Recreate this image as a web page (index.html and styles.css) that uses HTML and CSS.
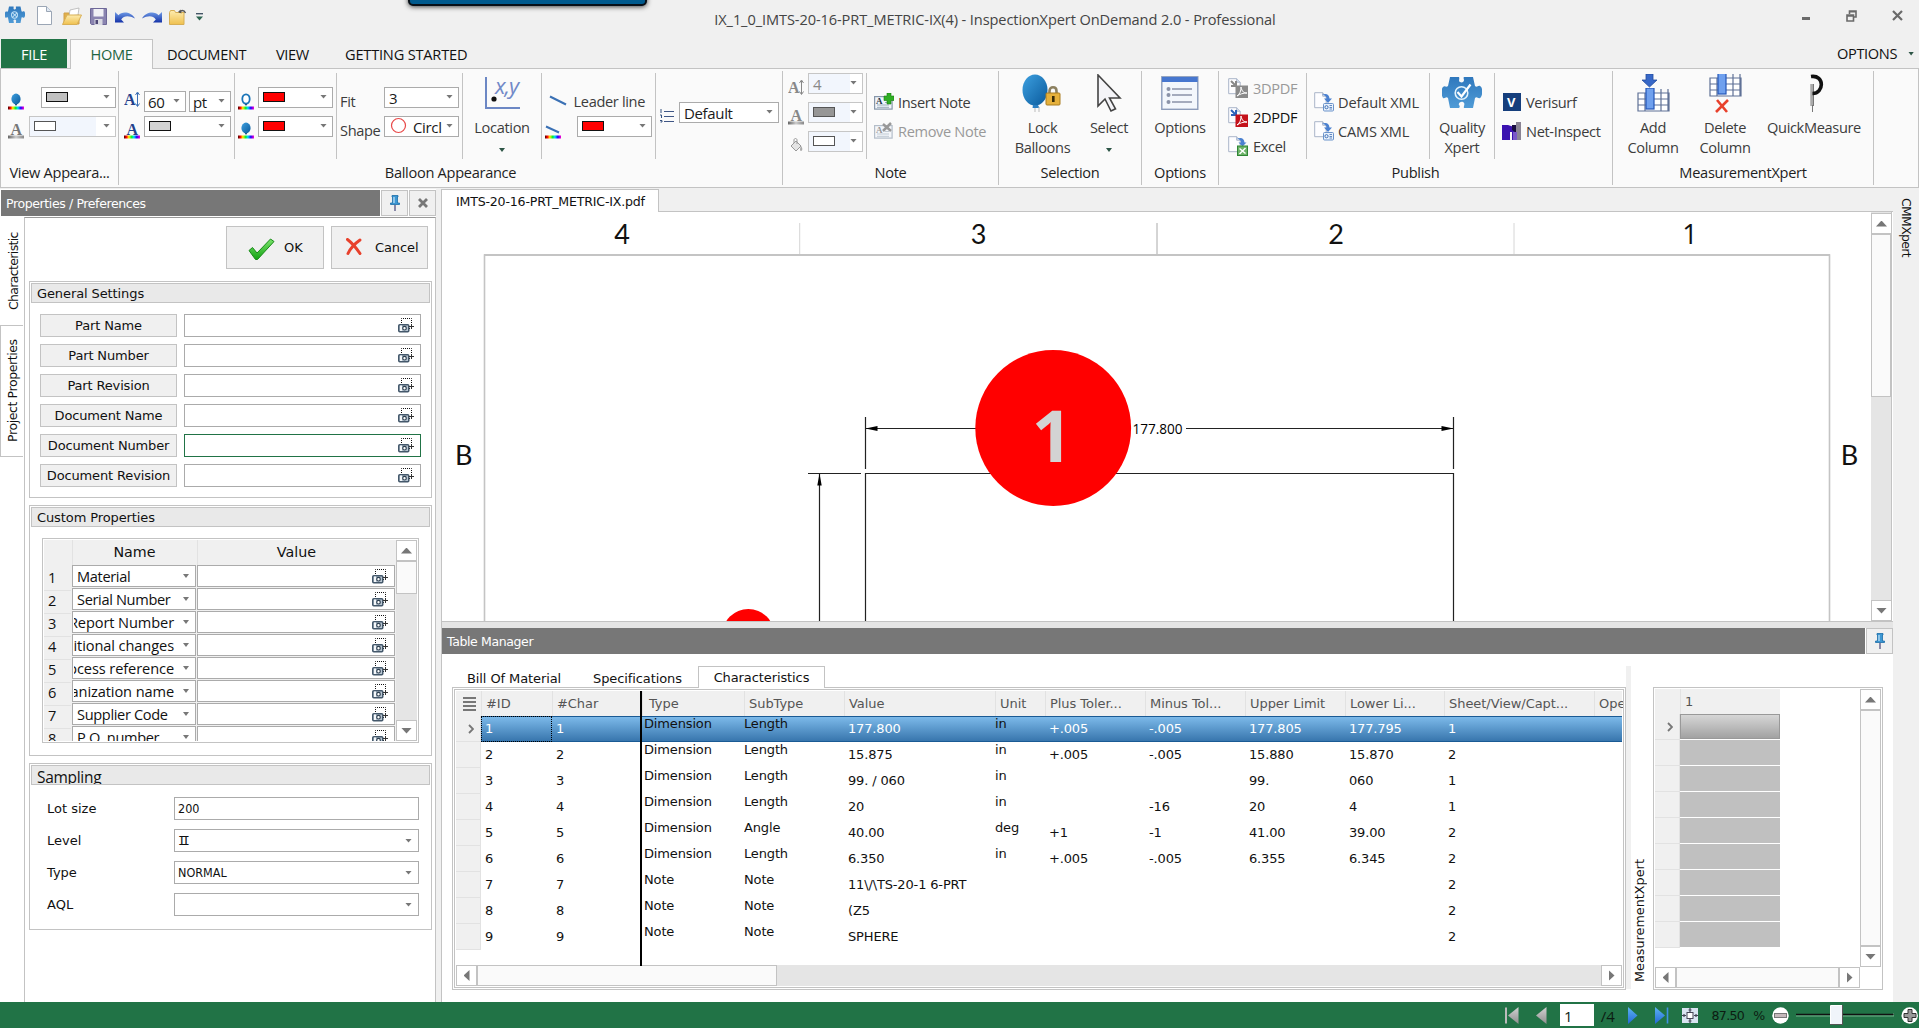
FILE: index.html
```html
<!DOCTYPE html>
<html lang="en">
<head>
<meta charset="utf-8">
<title>InspectionXpert OnDemand 2.0</title>
<link rel="stylesheet" href="styles.css">
</head>
<body>
<svg class="defs" width="0" height="0">
  <defs>
    <linearGradient id="gBlue" x1="0" y1="0" x2="1" y2="1"><stop offset="0" stop-color="#3da0e0"/><stop offset="1" stop-color="#0a5a9c"/></linearGradient>
    <linearGradient id="gPuz" x1="0" y1="0" x2="0" y2="1"><stop offset="0" stop-color="#2f78bd"/><stop offset="1" stop-color="#4f9bd6"/></linearGradient>
    <linearGradient id="gUndo" x1="0" y1="0" x2="0" y2="1"><stop offset="0" stop-color="#6f9be6"/><stop offset="1" stop-color="#1432a8"/></linearGradient>
    <linearGradient id="gFold" x1="0" y1="0" x2="0" y2="1"><stop offset="0" stop-color="#fdecb0"/><stop offset="1" stop-color="#efc04e"/></linearGradient>
    <linearGradient id="gGreen" x1="0" y1="0" x2="0" y2="1"><stop offset="0" stop-color="#7be36c"/><stop offset="1" stop-color="#14a314"/></linearGradient>
    <linearGradient id="gRain"><stop offset="0" stop-color="#400"/><stop offset=".15" stop-color="#f00"/><stop offset=".3" stop-color="#fe0"/><stop offset=".48" stop-color="#0e3"/><stop offset=".62" stop-color="#0df"/><stop offset=".8" stop-color="#20f"/><stop offset="1" stop-color="#f0c"/></linearGradient>
    <linearGradient id="gGray"><stop offset="0" stop-color="#666"/><stop offset=".5" stop-color="#ccc"/><stop offset="1" stop-color="#888"/></linearGradient>
    <linearGradient id="gNavG" x1="0" y1="0" x2="0" y2="1"><stop offset="0" stop-color="#d2d2d2"/><stop offset="1" stop-color="#8e8e8e"/></linearGradient>
    <linearGradient id="gNavB" x1="0" y1="0" x2="0" y2="1"><stop offset="0" stop-color="#5cb4f0"/><stop offset="1" stop-color="#2468d8"/></linearGradient>
  </defs>
  <symbol id="puzzle" viewBox="0 0 40 34"><path fill="url(#gPuz)" d="M8 1l9 0c1 2-1 4 1 5 2 1 4 0 4-2 0-1-1-2 0-3l9 0 2 9c2 2 3-1 5 0 3 1 3 10 0 12-2 1-3-2-5 0l-2 10-9 0c-1-2 2-4-1-6-2-1-5 1-4 3 1 1 1 2 0 3L8 32 6 22c-2-2-3 1-5 0-2-3-2-9 0-11 2-2 3 1 5-1z"/></symbol>
  <symbol id="balloon" viewBox="0 0 16 17"><ellipse cx="8" cy="6" rx="4.600" ry="5.400" fill="url(#gBlue)"/><path d="M7 11h2l-.5 1.500h-1z" fill="#147"/><rect y="13.500" width="16" height="3" fill="url(#gRain)"/></symbol>
  <symbol id="ring" viewBox="0 0 16 17"><ellipse cx="8" cy="6" rx="3.700" ry="4.700" fill="#fff" stroke="#1a74b8" stroke-width="1.800"/><path d="M7 11h2l-.5 1.500h-1z" fill="#147"/><rect y="13.500" width="16" height="3" fill="url(#gRain)"/></symbol>
  <symbol id="cam" viewBox="0 0 16 17"><rect x="3.500" y="1.500" width="10" height="10" fill="none" stroke="#111" stroke-dasharray="1 1" stroke-dashoffset=".5"/><rect x=".75" y="7.750" width="10" height="7" rx="1" fill="#b9c6d2" stroke="#44586b" stroke-width="1.500"/><rect x="2" y="8.500" width="2" height="5.500" fill="#f4f7fa"/><circle cx="6.500" cy="11.200" r="1.800" fill="#fff" stroke="#2d3f50" stroke-width="1.200"/><path d="M11 9.500h5M13.500 7v5" stroke="#333"/></symbol>
  <symbol id="pin" viewBox="0 0 10 16"><path d="M2 .5h6v1.500H7.500V8H9.500v1.500H.5V8H2.500V2H2z" fill="#3c97d3" stroke="#1a6da8" stroke-width=".8"/><path d="M4 2v6" stroke="#c6e5f8" stroke-width="1.200"/><path d="M5 10v6" stroke="#447" stroke-width="1.200"/></symbol>
  <symbol id="x" viewBox="0 0 16 17"><path d="M1.500 1.500C6 5 11 11 14 15.500M14 2C9 5.500 4 11 2 15.500" stroke="#e8412c" stroke-width="3" stroke-linecap="round" fill="none"/></symbol>
  <symbol id="page" viewBox="0 0 20 20"><path d="M.7.700h8l3.500 3.500v11.500H.7z" fill="#fdfdff" stroke="#a9b4c8"/><path d="M8.700.700v3.500h3.500" fill="#dde6f2" stroke="#a9b4c8"/></symbol>
  <symbol id="xml" viewBox="0 0 20 20"><use href="#page"/><path d="M8 2.500c5-1.500 7 0 7.500 4h2.500l-4 4.500-4-4.500h2.500c0-2-1-3-4.500-4z" fill="#4a80d0"/><rect x="9.500" y="11.500" width="10" height="7.500" rx="1" fill="#e9f1fb" stroke="#6b93ca"/><circle cx="12.500" cy="15.200" r="1.600" fill="none" stroke="#4272b8"/><path d="M15.500 13.500h2.500M15.500 15.500h2.500M15.500 17h2.500" stroke="#4272b8" stroke-width=".8"/></symbol>
  <symbol id="noteico" viewBox="0 0 20 17"><rect x=".6" y="3.600" width="17.500" height="12.500" fill="#f1f5fa" stroke="#8797aa" stroke-width="1.200"/><path d="M3 12h12M3 14.300h12M11 9.500h4" stroke="#9aabbb"/></symbol>
  <symbol id="grid" viewBox="0 0 33 24"><g fill="#fff" stroke="#5f7196" stroke-width="1.200"><path d="M1 5h31v18H1zM1 11h31M1 17h31M8 5v18M24 1v22M31 1v22"/></g><rect x="9" y="0" width="8" height="21" fill="#6fa0ee" stroke="#2456b8" stroke-width="1.200"/></symbol>
</svg>

<header class="titlebar">
  <div class="blue-tab"></div>
  <div class="qat">
    <svg class="q-logo" width="20" height="18" viewBox="0 0 40 34" preserveAspectRatio="none"><use href="#puzzle"/><circle cx="19" cy="17" r="6" fill="none" stroke="#bfe0f6" stroke-width="2"/><path d="M15 13l9 8M24 13l-9 8" stroke="#bfe0f6" stroke-width="2"/></svg>
    <svg class="q-new" width="15" height="19" viewBox="0 0 15 19"><path d="M.5.500h9l5 5v13H.5z" fill="#fff" stroke="#9ba6b5"/><path d="M9.500.500v5h5" fill="#dfe8f3" stroke="#9ba6b5"/></svg>
    <svg class="q-open" width="20" height="18" viewBox="0 0 20 18"><path d="M2 6h5l1 2h9v9H2z" fill="#e2b04a" stroke="#d0a04a"/><path d="M8 3l9-2-1 7-9 1z" fill="#fff" stroke="#aaa" stroke-width=".7"/><path d="M.5 17.500L5 8h14.500L15 17.500z" fill="url(#gFold)" stroke="#d9b055"/></svg>
    <svg class="q-save" width="17" height="17" viewBox="0 0 17 17"><path d="M.5.500h16v16h-15l-1-1z" fill="#8a84b0" stroke="#6e6898"/><rect x="3.500" y="1" width="10" height="7.500" fill="#f1f1f5"/><rect x="4.500" y="11" width="8" height="6" fill="#d9d9e2"/><rect x="5.500" y="12" width="2.500" height="4" fill="#4e4876"/></svg>
    <svg class="q-undo" width="20" height="13" viewBox="0 0 20 13"><path d="M0 1v10.500h9L6.200 8.500C9 4.500 14 4.500 20 7.500 16 .500 7 0 3.500 4.200z" fill="url(#gUndo)"/></svg>
    <svg class="q-redo" width="20" height="13" viewBox="0 0 20 13"><path d="M20 1v10.500h-9l2.800-3C11 4.500 6 4.500 0 7.500 4 .500 13 0 16.500 4.200z" fill="url(#gUndo)"/></svg>
    <svg class="q-folder" width="18" height="16" viewBox="0 0 18 16"><path d="M.5 3.500l1-2h4l1 2H15v12H.5z" fill="url(#gFold)" stroke="#d6ae55"/><path d="M10.500 3.500C12 1 15 .500 16.500 4" fill="none" stroke="#555" stroke-width="1.400"/><path d="M11.500.500L9 3l3.500 1.500z" fill="#555"/></svg>
    <svg width="7" height="8" viewBox="0 0 7 8"><path d="M0 .700h7" stroke="#456" stroke-width="1.400"/><path d="M0 3.500h7L3.500 7.500z" fill="#2d6450"/></svg>
  </div>
  <div class="title">IX_1_0_IMTS-20-16-PRT_METRIC-IX(4) - InspectionXpert OnDemand 2.0 - Professional</div>
  <div class="winbtns">
    <svg width="8" height="3"><rect width="8" height="3" fill="#6a6a6a"/></svg>
    <svg width="11" height="12" viewBox="0 0 11 12"><path d="M3.500 4V1h6.500v6H7.500M3 1.800h7" fill="none" stroke="#6a6a6a" stroke-width="1.600"/><path d="M1 5h6.500v6H1zM1 6h6" fill="none" stroke="#6a6a6a" stroke-width="1.600"/></svg>
    <svg width="11" height="11" viewBox="0 0 11 11"><path d="M1 1l9 9M10 1l-9 9" stroke="#6a6a6a" stroke-width="2.200"/></svg>
  </div>
</header>

<nav class="tabs">
  <span class="tab file">FILE</span><span class="tab home">HOME</span><span class="tab t-doc">DOCUMENT</span><span class="tab t-view">VIEW</span><span class="tab t-get">GETTING STARTED</span>
  <span class="tab options">OPTIONS <b class="dd dark"></b></span>
</nav>

<section class="ribbon">
  <div class="group g-view">
    <div class="segs"><div class="seg stack">
      <div class="row"><svg class="ico" width="16" height="17"><use href="#balloon"/></svg><span class="combo w75"><i class="sw silver"></i><b class="dd"></b></span></div>
      <div class="row"><svg class="ico" width="16" height="17"><text x="2.500" y="12.500" class="ico-serif s14" fill="#777">A</text><rect y="13.500" width="16" height="3" fill="url(#gGray)"/></svg><span class="combo off w87"><i class="sw white"></i><b class="dd"></b></span></div>
    </div></div>
    <div class="caption">View Appeara...</div>
  </div>

  <div class="group g-balloon">
    <div class="segs">
      <div class="seg stack div s-font">
        <div class="row lower"><svg class="ico" width="16" height="17"><text x="0" y="14" class="ico-serif s15" fill="#23418c">A</text><path d="M13.500 2v13M11.500 4l2-3 2 3M11.500 12.500l2 3 2-3" fill="none" stroke="#3c6fb5"/></svg><span class="pair"><span class="combo w42">60<b class="dd"></b></span><span class="combo w42">pt<b class="dd"></b></span></span></div>
        <div class="row"><svg class="ico" width="16" height="17"><text x="2.500" y="12.500" class="ico-serif s14" fill="#23418c">A</text><rect y="13.500" width="16" height="3" fill="url(#gRain)"/></svg><span class="combo w87"><i class="sw lgray"></i><b class="dd"></b></span></div>
      </div>
      <div class="seg stack div s-color">
        <div class="row"><svg class="ico" width="16" height="17"><use href="#ring"/></svg><span class="combo w75"><i class="sw red"></i><b class="dd"></b></span></div>
        <div class="row"><svg class="ico" width="16" height="17"><use href="#balloon"/></svg><span class="combo w75"><i class="sw red"></i><b class="dd"></b></span></div>
      </div>
      <div class="seg stack div s-fit">
        <div class="row"><span class="lbl">Fit</span><span class="combo w75">3<b class="dd"></b></span></div>
        <div class="row"><span class="lbl">Shape</span><span class="combo w75"><svg class="circ" width="17" height="17"><circle cx="8.500" cy="8.500" r="7" fill="none" stroke="#e84848" stroke-width="1.200"/></svg>Circl<b class="dd"></b></span></div>
      </div>
      <div class="seg div s-loc">
        <div class="big"><span class="bi"><svg class="loc" width="38" height="35" viewBox="0 0 38 35"><path d="M3 1v31h34" fill="none" stroke="#6c87c4" stroke-width="2"/><circle cx="11" cy="23" r="2.600" fill="#111"/><text x="12" y="18" class="xy" fill="#7189c8">x,y</text></svg></span><span>Location</span><b class="dd dark"></b></div>
      </div>
      <div class="seg stack div s-lead">
        <div class="row"><svg class="lead1" width="18" height="11"><path d="M1 1.500l16 8" stroke="#3a70b4" stroke-width="2"/></svg><span class="lbl">Leader line</span></div>
        <div class="row"><svg class="lead2" width="16" height="14"><path d="M1 1.500l13 6" stroke="#3a70b4" stroke-width="2"/><rect y="10.500" width="16" height="3" fill="url(#gRain)"/></svg><span class="combo w75"><i class="sw red"></i><b class="dd"></b></span></div>
      </div>
      <div class="seg s-def"><div class="row"><svg class="lst" width="14" height="14"><path d="M4 2.500h10M4 7.500h10M4 12.500h10" stroke="#3f5685"/><path d="M1 0v4M0 6h1.500v3M0 11.500h2v1.500H.5" fill="none" stroke="#35517f"/></svg><span class="combo w100">Default<b class="dd"></b></span></div></div>
    </div>
    <div class="caption">Balloon Appearance</div>
  </div>

  <div class="group g-note">
    <div class="segs">
      <div class="seg div s-note">
        <div class="row"><svg class="ico" width="16" height="17"><text x="0" y="14" class="ico-serif s15" fill="#888">A</text><path d="M13.500 2v13M11.500 4l2-3 2 3M11.500 12.500l2 3 2-3" fill="none" stroke="#888"/></svg><span class="combo off w55">4<b class="dd"></b></span></div>
        <div class="row"><svg class="ico" width="16" height="17"><text x="2.500" y="12.500" class="ico-serif s14" fill="#888">A</text><rect y="13.500" width="16" height="3" fill="url(#gGray)"/></svg><span class="combo off w55"><i class="sw gray"></i><b class="dd"></b></span></div>
        <div class="row"><svg class="ico" width="16" height="17"><path d="M3 9l5-5 5 5-5 5z" fill="#e4e4e4" stroke="#999"/><path d="M6 6V3c0-2 3-2 3 0v4" fill="none" stroke="#999"/><path d="M13 9c2 2 1.500 5 0 5s-1-3 0-5z" fill="#aaa"/></svg><span class="combo off w55"><i class="sw white"></i><b class="dd"></b></span></div>
      </div>
      <div class="seg list two">
        <div class="item"><svg width="20" height="17" viewBox="0 0 20 17"><use href="#noteico"/><text x="2" y="11" class="ico-serif s9" fill="#234">A</text><path d="M13 0h4v3h3v4.500h-3V11h-4V7.500H10V3h3z" fill="#2fae24" stroke="#187c10" stroke-width=".6"/></svg><span>Insert Note</span></div>
        <div class="item dis"><svg width="20" height="17" viewBox="0 0 20 17"><g opacity=".6"><use href="#noteico"/><text x="2" y="11" class="ico-serif s9" fill="#555">A</text></g><path d="M9 2l8 7M17 1L9 9" stroke="#999" stroke-width="2.500"/></svg><span>Remove Note</span></div>
      </div>
    </div>
    <div class="caption">Note</div>
  </div>

  <div class="group g-sel">
    <div class="segs">
      <div class="big b-lock"><span class="bi"><svg width="40" height="39" viewBox="0 0 40 39"><ellipse cx="13" cy="16" rx="12.500" ry="15.500" fill="url(#gBlue)"/><path d="M11 31h5l1.500 3h-7z" fill="#2b7fc2"/><path d="M13 34v4M17 33v5" stroke="#bbb"/><path d="M27.500 20v-3c0-5 7-5 7 0v3" fill="none" stroke="#8c8060" stroke-width="2.600"/><rect x="24" y="19" width="14" height="12" rx="1" fill="#e6b13c" stroke="#a97c20"/><rect x="30" y="22" width="2.600" height="6" fill="#3a2c08"/></svg></span><span>Lock</span><span>Balloons</span></div>
      <div class="big b-select"><span class="bi"><svg width="26" height="39" viewBox="0 0 26 39"><path d="M2 1v31l7-7 6 12 4.500-2.200L13.500 24H24z" fill="#f4f4f8" stroke="#444" stroke-width="1.600"/></svg></span><span>Select</span><b class="dd dark"></b></div>
    </div>
    <div class="caption">Selection</div>
  </div>

  <div class="group g-opt">
    <div class="segs"><div class="big b-opt"><span class="bi"><svg width="38" height="35" viewBox="0 0 38 35"><rect x=".8" y=".8" width="36" height="32.500" fill="#f3f7fc" stroke="#8c9cba" stroke-width="1.400"/><rect x="1" y="1" width="35.600" height="5" fill="#4777cf"/><g fill="#8b93a8"><circle cx="7.500" cy="13" r="2"/><circle cx="7.500" cy="19" r="2"/><circle cx="7.500" cy="26" r="2"/></g><path d="M11 13h20M11 19h20M11 26h20" stroke="#8b93a8" stroke-width="1.500"/></svg></span><span>Options</span></div></div>
    <div class="caption">Options</div>
  </div>

  <div class="group g-pub">
    <div class="segs">
      <div class="seg div list three">
        <div class="item dis"><svg width="20" height="20" viewBox="0 0 20 20"><use href="#page"/><path d="M3 3l5 5M8 3v5H3" stroke="#888" stroke-width="2" fill="none"/><rect x="7.500" y="7.500" width="12.500" height="12.500" fill="#8a8a8a"/><path d="M9 18c3-2 4-5 4-9 1 5 3 6 6 6-4 0-7 1-10 3z" fill="none" stroke="#fff"/></svg><span>3DPDF</span></div>
        <div class="item dk"><svg width="20" height="20" viewBox="0 0 20 20"><use href="#page"/><path d="M3 3l5 5M8 3v5H3" stroke="#2d62b8" stroke-width="2" fill="none"/><rect x="7.500" y="7.500" width="12.500" height="12.500" fill="#c4111a"/><path d="M9 18c3-2 4-5 4-9 1 5 3 6 6 6-4 0-7 1-10 3z" fill="none" stroke="#fff"/></svg><span>2DPDF</span></div>
        <div class="item"><svg width="20" height="20" viewBox="0 0 20 20"><use href="#page"/><path d="M9 2.500c5-1.500 7 0 7.500 4h2l-4 4-4-4h2.500c0-2-1-3-4-4z" fill="#4a80d0"/><rect x="9.500" y="10" width="10" height="9.500" fill="#6bb266" stroke="#2f8535"/><path d="M11.500 12.500l6 5M17.500 12l-6 6" stroke="#fff" stroke-width="1.500"/></svg><span>Excel</span></div>
      </div>
      <div class="seg div list two s-xml">
        <div class="item"><svg width="20" height="20"><use href="#xml"/></svg><span>Default XML</span></div>
        <div class="item"><svg width="20" height="20"><use href="#xml"/></svg><span>CAMS XML</span></div>
      </div>
      <div class="seg div s-qx"><div class="big"><span class="bi"><svg width="40" height="34" viewBox="0 0 40 34"><use href="#puzzle"/><circle cx="19.500" cy="17" r="6.300" fill="none" stroke="#e4f3fc" stroke-width="1.600"/><path d="M15.500 16l4 4.500 9-12" fill="none" stroke="#fff" stroke-width="2.200"/></svg></span><span>Quality</span><span>Xpert</span></div></div>
      <div class="seg list two s-ver">
        <div class="item"><svg width="20" height="20"><rect x="1" y="1" width="18" height="18" fill="#153e7c"/><text x="5" y="14.500" class="v-ico" fill="#fff">V</text></svg><span>Verisurf</span></div>
        <div class="item"><svg width="20" height="20"><path d="M0 4h6l6 2h3v13h-5v-8H8v8H0z" fill="#3a12b0"/><path d="M10 4h5v7h-2l-3-2z" fill="#170b40"/><rect x="14" y="1" width="5" height="18" fill="#8a8494"/><path d="M11 11h4v8h-4z" fill="#7a58c8"/></svg><span>Net-Inspect</span></div>
      </div>
    </div>
    <div class="caption">Publish</div>
  </div>

  <div class="group g-mx">
    <div class="segs">
      <div class="big w72"><span class="bi"><svg width="33" height="39" viewBox="0 0 33 39"><path d="M9 0h7v6h4l-7.500 7L5 6h4z" fill="#3768c8" stroke="#244c9c" stroke-width=".8"/><svg y="14" width="33" height="24"><use href="#grid"/></svg></svg></span><span>Add</span><span>Column</span></div>
      <div class="big w72"><span class="bi"><svg width="33" height="39" viewBox="0 0 33 39"><svg y="-1" width="33" height="24"><use href="#grid"/></svg><path d="M8 26l10 12M19 26L7 38" stroke="#e8412c" stroke-width="2.600" fill="none"/></svg></span><span>Delete</span><span>Column</span></div>
      <div class="big w106"><span class="bi"><svg width="20" height="39" viewBox="0 0 20 39"><path d="M8 10v22" stroke="#aaa" stroke-width="3.500"/><path d="M8.500 31v7M9.500 10v22" stroke="#777" stroke-width="1"/><path d="M7 2.500c14-2 13 17 1.500 17" fill="none" stroke="#111" stroke-width="3.600"/></svg></span><span>QuickMeasure</span></div>
    </div>
    <div class="caption">MeasurementXpert</div>
  </div>
</section>

<main class="work">
  <aside class="props">
    <div class="dockbar"><span class="docktitle">Properties / Preferences</span><span class="dockbtn"><svg width="10" height="16"><use href="#pin"/></svg></span><span class="dockbtn"><svg width="10" height="10"><path d="M1 1l8 8M9 1L1 9" stroke="#777" stroke-width="2.800"/></svg></span></div>
    <div class="props-body">
      <div class="sidetabs"><span class="vt v1">Characteristic</span><span class="vt v2">Project Properties</span></div>
      <div class="form">
        <div class="actions">
          <span class="btn ok"><svg width="28" height="23" viewBox="0 0 28 23"><path d="M2 12.500l3.500-3L10 15 23.500 1l3.500 2.500L10.500 21.500H8.500z" fill="url(#gGreen)" stroke="#178a17"/></svg>OK</span>
          <span class="btn cancel"><svg width="16" height="17"><use href="#x"/></svg>Cancel</span>
        </div>
        <section class="box general">
          <h3>General Settings</h3>
          <div class="fields">
            <span class="fbtn">Part Name</span><span class="inp"><svg width="16" height="17"><use href="#cam"/></svg></span>
            <span class="fbtn">Part Number</span><span class="inp"><svg width="16" height="17"><use href="#cam"/></svg></span>
            <span class="fbtn">Part Revision</span><span class="inp"><svg width="16" height="17"><use href="#cam"/></svg></span>
            <span class="fbtn">Document Name</span><span class="inp"><svg width="16" height="17"><use href="#cam"/></svg></span>
            <span class="fbtn">Document Number</span><span class="inp focus"><svg width="16" height="17"><use href="#cam"/></svg></span>
            <span class="fbtn">Document Revision</span><span class="inp"><svg width="16" height="17"><use href="#cam"/></svg></span>
          </div>
        </section>
        <section class="box custom">
          <h3>Custom Properties</h3>
          <div class="cgrid">
            <div class="crows">
              <div class="crow chead"><span></span><span>Name</span><span>Value</span></div>
              <div class="crow"><em>1</em><span class="cc">Material<b class="dd"></b></span><span class="cv"><svg width="16" height="17"><use href="#cam"/></svg></span></div>
              <div class="crow"><em>2</em><span class="cc">Serial Number<b class="dd"></b></span><span class="cv"><svg width="16" height="17"><use href="#cam"/></svg></span></div>
              <div class="crow"><em>3</em><span class="cc end"><span class="clip"><span>Report Number</span></span><b class="dd"></b></span><span class="cv"><svg width="16" height="17"><use href="#cam"/></svg></span></div>
              <div class="crow"><em>4</em><span class="cc end"><span class="clip"><span>itional changes</span></span><b class="dd"></b></span><span class="cv"><svg width="16" height="17"><use href="#cam"/></svg></span></div>
              <div class="crow"><em>5</em><span class="cc end"><span class="clip"><span>ocess reference</span></span><b class="dd"></b></span><span class="cv"><svg width="16" height="17"><use href="#cam"/></svg></span></div>
              <div class="crow"><em>6</em><span class="cc end"><span class="clip"><span>anization name</span></span><b class="dd"></b></span><span class="cv"><svg width="16" height="17"><use href="#cam"/></svg></span></div>
              <div class="crow"><em>7</em><span class="cc">Supplier Code<b class="dd"></b></span><span class="cv"><svg width="16" height="17"><use href="#cam"/></svg></span></div>
              <div class="crow"><em>8</em><span class="cc">P.O. number<b class="dd"></b></span><span class="cv"><svg width="16" height="17"><use href="#cam"/></svg></span></div>
            </div>
            <div class="vscroll"><span class="sb"><b class="ar up"></b></span><span class="th"></span><span class="tr"></span><span class="sb"><b class="ar dn"></b></span></div>
          </div>
        </section>
        <section class="box sampling">
          <h3>Sampling</h3>
          <div class="sfields">
            <span>Lot size</span><span class="si">200</span>
            <span>Level</span><span class="si"><span class="roman">II</span><b class="dd"></b></span>
            <span>Type</span><span class="si">NORMAL<b class="dd"></b></span>
            <span>AQL</span><span class="si"><b class="dd"></b></span>
          </div>
        </section>
      </div>
    </div>
  </aside>

  <div class="center">
    <div class="doctabs"><span class="doctab">IMTS-20-16-PRT_METRIC-IX.pdf</span><span class="docfill"></span></div>
    <div class="viewer">
      <svg class="drawing" width="1428" height="409" viewBox="442 212 1428 409">
        <g fill="none" stroke="#c4c4c4"><path d="M484.500 621V255H1829.500V621" stroke-width="1.600"/><path d="M484 255H1830" stroke-width="2"/><path d="M799.700 223v31M1514 223v31" stroke="#d6d6d6"/><path d="M1157 223v31" stroke="#aaa"/></g>
        <g class="zone"><text x="622" y="244">4</text><text x="978.500" y="244">3</text><text x="1336" y="244">2</text><text x="1690" y="244" class="one">1</text><text x="463.800" y="464.500">B</text><text x="1849.600" y="464.500">B</text></g>
        <g fill="none" stroke="#222" stroke-width="1.200"><path d="M865.500 417v52M1453.500 417v52M866 428.500h180M1186 428.500h267M808 473.500h53M819.500 474v147"/><path d="M865.500 621V473.500H1453.500V621"/></g>
        <path d="M865.500 428.500l12-2.500v5zM1453.500 428.500l-12-2.500v5zM819.500 473.500l-2.200 12h4.400z"/>
        <circle cx="1053.200" cy="428" r="77.900" fill="red"/><circle cx="748.300" cy="635" r="26" fill="red"/>
        <text class="bnum" x="1052" y="462">1</text>
        <text class="dim" x="1132.500" y="433.500" textLength="50">177.800</text>
      </svg>
      <div class="vscroll big-v"><span class="sb"><b class="ar up"></b></span><span class="th"></span><span class="tr"></span><span class="sb"><b class="ar dn"></b></span></div>
    </div>
    <div class="splitter"></div>
    <div class="dockbar tm"><span class="docktitle">Table Manager</span><span class="dockbtn"><svg width="10" height="16"><use href="#pin"/></svg></span></div>
    <div class="tm-body">
      <div class="tm-left">
        <div class="tmtabs"><span class="tt1">Bill Of Material</span><span class="tt2">Specifications</span><span class="act">Characteristics</span></div>
        <div class="tbox"><div class="tinner">
          <div class="frozen"></div>
          <div class="tr0 thead"><span class="ham"><svg width="13" height="14"><path d="M0 1h13M0 5h13M0 9h13M0 13h13" stroke="#777" stroke-width="2"/></svg></span><span>#ID</span><span>#Char</span><span>Type</span><span>SubType</span><span>Value</span><span>Unit</span><span>Plus Toler...</span><span>Minus Tol...</span><span>Upper Limit</span><span>Lower Li...</span><span>Sheet/View/Capt...</span><span>Ope</span></div>
          <div class="tr0 sel"><span class="ind"><svg width="6" height="10"><path d="M1 1l4 4-4 4" fill="none" stroke="#777" stroke-width="1.800"/></svg></span><span class="foc">1</span><span>1</span><span class="t">Dimension</span><span class="t">Length</span><span>177.800</span><span class="t">in</span><span>+.005</span><span>-.005</span><span>177.805</span><span>177.795</span><span>1</span><span></span></div>
          <div class="tr0"><span class="ind"></span><span>2</span><span>2</span><span class="t">Dimension</span><span class="t">Length</span><span>15.875</span><span class="t">in</span><span>+.005</span><span>-.005</span><span>15.880</span><span>15.870</span><span>2</span></div>
          <div class="tr0"><span class="ind"></span><span>3</span><span>3</span><span class="t">Dimension</span><span class="t">Length</span><span>99. / 060</span><span class="t">in</span><span></span><span></span><span>99.</span><span>060</span><span>1</span></div>
          <div class="tr0"><span class="ind"></span><span>4</span><span>4</span><span class="t">Dimension</span><span class="t">Length</span><span>20</span><span class="t">in</span><span></span><span>-16</span><span>20</span><span>4</span><span>1</span></div>
          <div class="tr0"><span class="ind"></span><span>5</span><span>5</span><span class="t">Dimension</span><span class="t">Angle</span><span>40.00</span><span class="t">deg</span><span>+1</span><span>-1</span><span>41.00</span><span>39.00</span><span>2</span></div>
          <div class="tr0"><span class="ind"></span><span>6</span><span>6</span><span class="t">Dimension</span><span class="t">Length</span><span>6.350</span><span class="t">in</span><span>+.005</span><span>-.005</span><span>6.355</span><span>6.345</span><span>2</span></div>
          <div class="tr0"><span class="ind"></span><span>7</span><span>7</span><span class="t">Note</span><span class="t">Note</span><span>11\/\TS-20-1 6-PRT</span><span></span><span></span><span></span><span></span><span></span><span>2</span></div>
          <div class="tr0"><span class="ind"></span><span>8</span><span>8</span><span class="t">Note</span><span class="t">Note</span><span>(Z5</span><span></span><span></span><span></span><span></span><span></span><span>2</span></div>
          <div class="tr0"><span class="ind"></span><span>9</span><span>9</span><span class="t">Note</span><span class="t">Note</span><span>SPHERE</span><span></span><span></span><span></span><span></span><span></span><span>2</span></div>
          <div class="hscroll"><span class="sb"><b class="ar lt"></b></span><span class="th"></span><span class="tr"></span><span class="sb"><b class="ar rt"></b></span></div>
        </div></div>
      </div>
      <div class="vsplit"></div>
      <div class="tm-right">
        <span class="vt mxt">MeasurementXpert</span>
        <div class="mxbox">
          <div class="mxmain">
            <div class="mxrows">
              <div class="mxh"><span></span><span>1</span></div>
              <div class="mxr first"><span><svg width="6" height="10"><path d="M1 1l4 4-4 4" fill="none" stroke="#777" stroke-width="1.800"/></svg></span><span></span></div>
              <div class="mxr"><span></span><span></span></div><div class="mxr"><span></span><span></span></div><div class="mxr"><span></span><span></span></div><div class="mxr"><span></span><span></span></div><div class="mxr"><span></span><span></span></div><div class="mxr"><span></span><span></span></div><div class="mxr"><span></span><span></span></div><div class="mxr"><span></span><span></span></div>
            </div>
            <div class="vscroll"><span class="sb"><b class="ar up"></b></span><span class="th"></span><span class="sb"><b class="ar dn"></b></span></div>
          </div>
          <div class="hscroll"><span class="sb"><b class="ar lt"></b></span><span class="th"></span><span class="sb"><b class="ar rt"></b></span></div>
        </div>
      </div>
    </div>
  </div>

  <div class="rightstrip"><span class="vt cmm">CMMXpert</span></div>
</main>

<footer class="status">
  <svg class="n1" width="14" height="17" viewBox="0 0 14 17"><path d="M1 .500v16" stroke="#bbb" stroke-width="2"/><path d="M13.500 0v17L3 8.500z" fill="url(#gNavG)"/></svg>
  <svg class="n2" width="11" height="17" viewBox="0 0 11 17"><path d="M10.500 0v17L0 8.500z" fill="url(#gNavG)"/></svg>
  <span class="pg">1</span><span class="of">/4</span>
  <svg class="n3" width="10" height="17" viewBox="0 0 10 17"><path d="M0 0v17L9.500 8.500z" fill="url(#gNavB)"/></svg>
  <svg class="n4" width="14" height="17" viewBox="0 0 14 17"><path d="M12.500 .500v16" stroke="#3f92e4" stroke-width="1.600"/><path d="M0 0v17L10 8.500z" fill="url(#gNavB)"/></svg>
  <svg class="n5" width="16" height="15" viewBox="0 0 16 15"><rect width="16" height="15" fill="#d9e4f1"/><rect x="5" y="4.500" width="6" height="6" fill="#fff" stroke="#445"/><path d="M8 0v4M8 11v4M0 7.500h4M12 7.500h4M6.500 2h3M6.500 13h3M2 6v3M14 6v3" stroke="#445" stroke-width="1.200"/></svg>
  <span class="zm">87.50</span><span class="pc">%</span>
  <svg class="n6" width="17" height="17" viewBox="0 0 17 17"><circle cx="8.500" cy="8.500" r="8.200" fill="#fff"/><rect x="2.500" y="6.500" width="12" height="4" fill="#c4b8bb" stroke="#777"/></svg>
  <svg class="n7" width="98" height="22" viewBox="0 0 98 22"><path d="M0 10.500h98" stroke="#111" stroke-width="1.600"/><path d="M0 12h98v-3" fill="none" stroke="#8cc39f" stroke-width=".8"/><rect x="34.500" y="1.500" width="12" height="19" fill="#f0f4fa" stroke="#555"/><path d="M34.500 20V1.500H46" fill="none" stroke="#fff"/></svg>
  <svg class="n8" width="18" height="17" viewBox="0 0 18 17"><circle cx="8.700" cy="8.500" r="8.200" fill="#fff"/><path d="M7 2.500h4V6.500h4v4h-4v4H7v-4H3v-4h4z" fill="#999" stroke="#333"/></svg>
</footer>
</body>
</html>
```

FILE: styles.css
```css
* { box-sizing: border-box; }
html, body { margin: 0; width: 1919px; height: 1028px; overflow: hidden; }
body { display: flex; flex-direction: column; background: #f0f0f0; color: #111; font-family: "DejaVu Sans", sans-serif; font-size: 13px; }
svg { display: block; flex: none; }
.defs { position: absolute; }
b, em, i { font-style: normal; font-weight: normal; }
.ico-serif { font-family: "Liberation Serif", serif; font-weight: bold; }
.s9 { font-size: 9px; } .s14 { font-size: 16px; } .s15 { font-size: 16px; }
.loc { overflow: visible; }
.xy { font: italic 22px "Open Sans", sans-serif; letter-spacing: -1px; }
.v-ico { font: bold 13px "Open Sans", sans-serif; }

/* title bar */
.titlebar, .tabs, .ribbon { font-family: "Open Sans", "Noto Sans", sans-serif; font-size: 14.6px; letter-spacing: -.35px; flex: none; }
.titlebar { height: 39px; position: relative; display: flex; }
.blue-tab { position: absolute; left: 408px; top: -6px; width: 239px; height: 12px; background: #005a8e; border: 2px solid #081018; border-radius: 0 0 5px 5px; box-shadow: 0 1px 5px #444; }
.qat { width: 208px; padding-left: 5px; display: flex; align-items: flex-start; }
.q-logo { margin: 6px 12px 0 0; } .q-new { margin: 6px 10px 0 0; } .q-open { margin: 7px 8px 0 0; } .q-save { margin: 8px 8px 0 0; }
.q-undo { margin: 11px 7px 0 0; } .q-redo { margin: 11px 7px 0 0; } .q-folder { margin: 9px 9px 0 0; } .qat svg:last-child { margin-top: 13px; }
.title { width: 1574px; line-height: 39px; text-align: center; color: #444; letter-spacing: -.1px; }
.winbtns { display: flex; width: 137px; padding: 10px 16px 0 20px; justify-content: space-between; }
.winbtns svg:first-child { margin-top: 7px; }

.tabs { height: 29px; display: flex; }
.tab { line-height: 30px; color: #111; white-space: nowrap; }
.file { width: 66px; margin-left: 1px; background: #217346; color: #fff; text-align: center; }
.home { width: 83px; margin: 0 0 -1px 3px; border: 1px solid #c3c3c3; border-bottom: 0; background: #fafafa; color: #1e6441; text-align: center; position: relative; line-height: 29px; }
.t-doc { width: 108px; padding-left: 14px; }
.t-view { width: 69px; padding-left: 15px; }
.t-get { width: 1493px; padding-left: 15px; letter-spacing: -.2px; }
.options { display: flex; align-items: center; gap: 11px; margin-left: 14px; line-height: 29px; }

/* ribbon */
.ribbon { height: 120px; display: flex; border: 1px solid #c3c3c3; background: #fafafa; color: #3c3c3c; }
.group { height: 114px; margin-top: 2px; border-right: 1px solid #c3c3c3; display: flex; flex-direction: column; }
.g-view { width: 118px; } .g-balloon { width: 664px; } .g-note { width: 216px; } .g-sel { width: 143px; } .g-opt { width: 77px; } .g-pub { width: 394px; } .g-mx { width: 261px; }
.segs { display: flex; height: 89px; padding-top: 2px; }
.caption { text-align: center; line-height: 24px; color: #1e1e1e; white-space: nowrap; letter-spacing: -.3px; }
.seg { height: 86px; flex: 1; }
.seg.div { border-right: 1px solid #c3c3c3; flex: none; }
.stack { padding-top: 14px; }
.row { display: flex; height: 29px; justify-content: space-between; align-items: flex-start; padding: 0 2px 0 7px; }
.ico { margin-top: 6px; }
.combo { height: 21px; border: 1px solid #ababab; background: #fff; display: flex; align-items: center; padding: 0 5px 0 4px; color: #1a1a1a; font-size: 15px; }
.combo .dd { margin-left: auto; margin-bottom: 2px; }
.combo.off { background: linear-gradient(90deg, #f2f6fd 0 78%, #fff 78%); border-color: #c6c6c6; color: #888; }
.w42 { width: 42px; } .w55 { width: 55px; } .w75 { width: 75px; } .w87 { width: 87px; } .w100 { width: 100px; }
.dd { display: block; width: 7px; height: 4px; background: #777; clip-path: polygon(0 0, 100% 0, 50% 100%); flex: none; }
.dd.dark { background: #2d5546; width: 6px; }
.sw { width: 22px; height: 10px; border: 1px solid #111; margin-bottom: 2px; }
.silver { background: #c0c0c0; } .lgray { background: #d3d3d3; } .red { background: red; } .gray { background: #969696; border-color: #555; } .white { background: #fff; border-color: #555; }
.s-font { width: 116px; } .s-font .row { padding: 0 3px 0 5px; } .s-font .lower { height: 29px; }
.lower .ico, .lower .pair { margin-top: 4px; } .pair { display: flex; gap: 3px; }
.pair .combo { padding: 0 5px 0 3px; }
.s-color { width: 102px; } .s-color .row { padding-left: 3px; padding-right: 3px; }
.s-fit { width: 126px; } .s-fit .row { padding-left: 3px; padding-right: 3px; }
.lbl { line-height: 21px; margin-top: 4px; font-size: 14.6px; white-space: nowrap; }
.circ { margin: 0 6px 2px 1px; }
.s-loc { width: 79px; }
.s-lead { width: 114px; } .s-lead .row { padding-left: 3px; padding-right: 3px; }
.lead1 { margin: 8px 0 0 4px; } .s-lead .lbl { margin-right: 7px; } .lead2 { margin-top: 9px; }
.s-def { padding-top: 29px; } .s-def .row { padding: 0 3px 0 4px; } .lst { margin-top: 7px; }
.s-note { width: 84px; } .s-note .row { padding: 0 3px 0 5px; }
.big { display: flex; flex-direction: column; align-items: center; line-height: 20px; white-space: nowrap; }
.bi { height: 44px; display: flex; align-items: center; padding-bottom: 4px; }
.big .dd { margin-top: 11px; }
.b-lock { width: 70px; margin-left: 9px; } .b-select { width: 65px; } .b-opt { width: 77px; }
.w72 { width: 72px; } .w106 { width: 106px; } .g-mx .segs { padding-left: 4px; }
.item { height: 29px; display: flex; align-items: center; white-space: nowrap; }
.item.dis { color: #999; } .item.dk { color: #111; }
.two { padding-top: 14px; }
.g-note .item { padding-left: 7px; gap: 4px; }
.three { width: 88px; } .three .item { padding-left: 9px; gap: 5px; }
.s-xml { width: 123px; letter-spacing: -.15px; } .s-xml .item { padding-left: 7px; gap: 4px; }
.s-qx { width: 65px; } .s-ver .item { padding-left: 7px; gap: 4px; }

/* work area */
.work { flex: 1; display: flex; min-height: 0; padding-top: 1px; }
.props { width: 436px; background: #fff; display: flex; flex-direction: column; margin-right: 5px; padding-top: 1px; }
.dockbar { height: 26px; display: flex; gap: 1px; flex: none; }
.docktitle { flex: 1; background: #777; color: #fff; line-height: 28px; height: 26px; padding-left: 5px; font-size: 12.5px; letter-spacing: -.38px; }
.props .docktitle { margin-left: 1px; }
.dockbtn { width: 27px; background: #f0f0f0; border: 1px solid #c3c3c3; display: flex; align-items: center; justify-content: center; }
.props-body { flex: 1; display: flex; padding-top: 1px; }
.sidetabs { width: 24px; display: flex; flex-direction: column; }
.vt { writing-mode: vertical-rl; transform: rotate(180deg); white-space: nowrap; color: #111; font-family: "DejaVu Sans", sans-serif; font-size: 12.5px; }
.v1 { height: 108px; text-align: center; line-height: 27px; width: 24px; letter-spacing: -.65px; }
.v2 { height: 132px; text-align: center; line-height: 24px; width: 23px; border: 1px solid #c3c3c3; border-left: 0; letter-spacing: -.4px; }
.form { flex: 1; border: 1px solid #c3c3c3; border-bottom: 0; border-top-color: #999; padding: 8px 2px 0 4px; }
.actions { display: flex; justify-content: flex-end; gap: 7px; padding-right: 5px; height: 55px; }
.btn { height: 43px; border: 1px solid #c3c3c3; background: #f0f0f0; display: flex; align-items: center; letter-spacing: -.1px; }
.ok { width: 98px; padding-left: 20px; gap: 9px; } .cancel { width: 97px; padding-left: 14px; gap: 13px; }
.ok svg { margin-top: 3px; } .cancel svg { margin-bottom: 2px; }
.box { border: 1px solid #c3c3c3; width: 403px; padding: 1px; }
.box h3 { margin: 0; height: 20px; border: 1px solid #c3c3c3; background: #e9e9e9; font-size: 13px; font-weight: normal; line-height: 19px; padding-left: 5px; overflow: hidden; letter-spacing: -.1px; }
.general { height: 217px; margin-bottom: 7px; }
.fields { display: grid; grid-template-columns: 137px 237px; grid-auto-rows: 23px; gap: 7px; padding: 11px 0 0 9px; }
.fbtn { background: #f0f0f0; border: 1px solid #c3c3c3; text-align: center; line-height: 21px; letter-spacing: -.15px; }
.inp { border: 1px solid #ababab; display: flex; justify-content: flex-end; align-items: center; padding: 0 6px 0 0; }
.inp.focus { border-color: #217346; }
.custom { height: 251px; margin-bottom: 7px; }
.cgrid { margin: 11px 0 0 11px; width: 377px; height: 205px; border: 1px solid #c3c3c3; padding: 1px; display: flex; }
.crows { width: 352px; height: 201px; overflow: hidden; }
.crow { display: grid; grid-template-columns: 27px 124px 198px; column-gap: 1px; height: 23px; font-family: "Open Sans", sans-serif; font-size: 14.6px; background: #f0f0f0; }
.crow.chead { height: 25px; font-family: "DejaVu Sans", sans-serif; font-size: 14.3px; text-align: center; line-height: 25px; }
.chead span + span { border-left: 1px solid #e2e2e2; }
.crow em { padding-left: 4px; line-height: 25px; border-bottom: 1px solid #e2e2e2; }
.cc, .cv { border: 1px solid #ababab; height: 22px; background: #fff; display: flex; align-items: center; line-height: 22px; white-space: nowrap; }
.cc { padding: 0 6px 0 4px; letter-spacing: -.35px; overflow: hidden; } .cc .dd { margin-left: auto; width: 6px; }
.cc.end { padding-left: 1px; } .clip { width: 102px; overflow: hidden; display: flex; justify-content: flex-end; padding-right: 2px; letter-spacing: -.1px; }
.cv { justify-content: flex-end; padding-right: 6px; }
.vscroll { width: 21px; display: flex; flex-direction: column; background: #e5e5e5; }
.hscroll { height: 21px; display: flex; background: #e5e5e5; }
.sb { width: 21px; height: 21px; border: 1px solid #c3c3c3; background: #fff; display: flex; align-items: center; justify-content: center; flex: none; }
.ar { display: block; background: #777; width: 11px; height: 6px; }
.up { clip-path: polygon(0 100%, 50% 0, 100% 100%); } .dn { clip-path: polygon(0 0, 50% 100%, 100% 0); }
.lt, .rt { width: 6px; height: 11px; } .lt { clip-path: polygon(100% 0, 0 50%, 100% 100%); } .rt { clip-path: polygon(0 0, 100% 50%, 0 100%); }
.th { background: #fafafa; border: 1px solid #c3c3c3; flex: none; }
.tr { flex: 1; }
.cgrid .vscroll { height: 201px; } .cgrid .th { height: 33px; }
.sampling { height: 167px; }
.sampling h3 { font-family: "Open Sans", sans-serif; font-size: 15.5px; letter-spacing: -.3px; line-height: 22px; }
.sfields { display: grid; grid-template-columns: 127px 245px; grid-auto-rows: 23px; row-gap: 9px; padding: 12px 0 0 16px; line-height: 23px; }
.si { border: 1px solid #ababab; padding: 0 6px 0 3px; display: flex; align-items: center; font-family: "DejaVu Sans Condensed", "DejaVu Sans", sans-serif; font-size: 12.5px; line-height: 23px; } .si .dd { margin-left: auto; }
.roman { font-family: "DejaVu Sans Mono", monospace; letter-spacing: -3.2px; }

.center { width: 1452px; display: flex; flex-direction: column; background: #fff; border-left: 1px solid #c3c3c3; }
.doctabs { height: 23px; display: flex; flex: none; }
.doctab { width: 217px; border: 1px solid #c3c3c3; border-width: 1px 1px 0 0; font-size: 12.6px; line-height: 24px; padding-left: 14px; letter-spacing: -.2px; white-space: nowrap; }
.docfill { flex: 1; background: #f0f0f0; border-bottom: 1px solid #c3c3c3; }
.viewer { height: 410px; display: flex; border-bottom: 1px solid #c3c3c3; flex: none; }
.drawing { margin-right: 1px; }
.zone { font-family: Lato, sans-serif; font-size: 27px; text-anchor: middle; fill: #111; }
.one { font-family: "Open Sans", sans-serif; }
.dim { font-family: "Open Sans", sans-serif; font-size: 13.6px; }
.bnum { font: bold 71px "Open Sans", sans-serif; fill: #d3d3d3; text-anchor: middle; }
.big-v { border-right: 1px solid #c3c3c3; padding-top: 1px; width: 21px; background: #e5e5e5; } .big-v .th { height: 163px; }
.splitter { height: 6px; background: #e5e5e5; flex: none; }
.tm { height: 26px; }
.tm-body { display: flex; padding-top: 12px; flex: 1; }
.tm-left { width: 1184px; padding-left: 10px; }
.tmtabs { height: 22px; display: flex; line-height: 25px; margin-bottom: -1px; position: relative; letter-spacing: -.1px; }
.tt1 { padding-left: 15px; width: 141px; } .tt2 { width: 105px; }
.act { width: 127px; border: 1px solid #c3c3c3; border-bottom: 0; text-align: center; background: #fff; line-height: 22px; }
.tbox { width: 1174px; height: 303px; border: 1px solid #c3c3c3; padding: 1px; }
.tinner { height: 299px; border: 1px solid #c3c3c3; padding: 1px; position: relative; display: flex; flex-direction: column; overflow: hidden; }
.frozen { position: absolute; left: 185px; top: 1px; width: 2px; height: 275px; background: #000; z-index: 1; }
.tr0 { display: grid; grid-template-columns: 25px 71px 90px 102px 100px 151px 50px 100px 100px 100px 99px 150px 29px; height: 26px; flex: none; line-height: 25px; white-space: nowrap; color: #111; letter-spacing: -.15px; }
.tr0 > span { overflow: hidden; padding-left: 4px; }
.tr0 > .t { line-height: 15px; padding-left: 0; color: #111; }
.tr0 > .t:nth-child(4) { padding-left: 2px; }
.tr0 > .ind { background: #f0f0f0; border-bottom: 1px solid #e2e2e2; border-right: 1px solid #e2e2e2; display: flex; align-items: center; padding-left: 12px; }
.thead { height: 25px; background: #f0f0f0; color: #555; line-height: 26px; letter-spacing: -.05px; }
.thead > span { border-left: 1px solid #e2e2e2; }
.thead > span:nth-child(4) { padding-left: 6px; }
.thead .ham { padding: 6px 0 0 7px; border: 0; }
.sel { color: #fff; background: linear-gradient(#7fbcec, #3573ab); box-shadow: inset 0 1px #1a5a94, inset 0 -1px #1a5a94; }
.sel .foc { outline: 1px dotted #000; outline-offset: -1px; }
.tinner .hscroll { margin-top: auto; } .tinner .hscroll .th { width: 300px; }
.vsplit { width: 5px; height: 323px; background: #f0f0f0; }
.tm-right { flex: 1; display: flex; padding: 21px 9px 0 0; }
.mxt { width: 17px; margin-right: 5px; height: 302px; line-height: 17px; font-size: 12.8px; text-align: left; padding-top: 7px; }
.mxbox { width: 230px; height: 303px; border: 1px solid #c3c3c3; padding: 1px; }
.mxmain { display: flex; height: 278px; }
.mxrows { width: 205px; }
.mxh, .mxr { display: grid; grid-template-columns: 25px 100px; height: 26px; }
.mxh { height: 25px; color: #555; line-height: 25px; background: #f0f0f0; width: 125px; }
.mxh span + span { padding-left: 4px; border-left: 1px solid #e2e2e2; }
.mxr span:first-child { background: #f0f0f0; border: 1px solid #e2e2e2; border-width: 0 1px 1px 0; display: flex; align-items: center; padding-left: 12px; }
.mxr span + span { background: #c0c0c0; border-bottom: 1px solid #fff; }
.mxr.first span + span { background: linear-gradient(#d6d6d6, #a2a2a2); border: 1px solid #999; margin-bottom: 1px; }
.mxmain .th { flex: 1; }
.mxbox .hscroll { width: 205px; } .mxbox .hscroll .th { flex: 1; }
.rightstrip { flex: 1; background: #f0f0f0; padding: 9px 0 0 3px; }
.cmm { transform: none; line-height: 20px; letter-spacing: -.7px; font-size: 12.5px; }

/* status bar */
.status { height: 26px; flex: none; background: #217346; display: flex; align-items: center; padding-left: 1505px; font-size: 12.6px; color: #0c1c12; white-space: nowrap; }
.n2 { margin-left: 17px; }
.pg { width: 34px; height: 22px; background: #fff; margin-left: 13px; padding-left: 4px; font: 15px/24px "Open Sans", sans-serif; }
.of { width: 34px; padding-left: 7px; font: 15px/22px "Open Sans", sans-serif; padding-top: 2px; }
.n4 { margin-left: 17px; } .n5 { margin-left: 13px; }
.zm { width: 42px; margin-left: 14px; letter-spacing: -.7px; } .pc { width: 19px; }
.n7 { margin-left: 7px; } .n8 { margin-left: 7px; }
```
